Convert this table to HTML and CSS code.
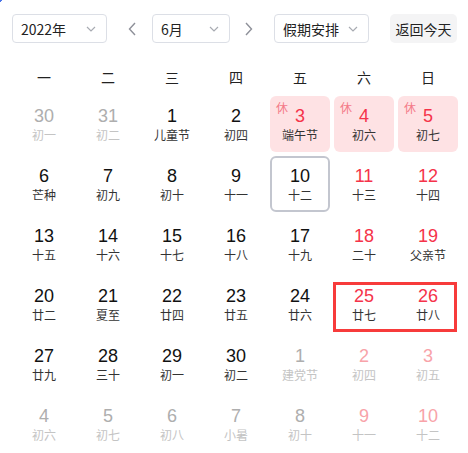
FILE: index.html
```html
<!DOCTYPE html>
<html lang="zh-CN">
<head>
<meta charset="utf-8">
<title>日历</title>
<link rel="stylesheet" href="styles.css">
</head>
<body>
<div class="corner-mark"></div>
<div class="app">
  <div class="toolbar">
    <div class="select w95"><span>2022年</span><svg class="chev" width="10" height="6" viewBox="0 0 10 6"><path d="M1 1l4 4 4-4" fill="none" stroke="#a8abb2" stroke-width="1.2"/></svg></div>
    <div class="arrow a-left"><svg width="8" height="14" viewBox="0 0 8 14"><path d="M7 1L1.5 7 7 13" fill="none" stroke="#8e9099" stroke-width="1.4"/></svg></div>
    <div class="select w78"><span>6月</span><svg class="chev" width="10" height="6" viewBox="0 0 10 6"><path d="M1 1l4 4 4-4" fill="none" stroke="#a8abb2" stroke-width="1.2"/></svg></div>
    <div class="arrow a-right"><svg width="8" height="14" viewBox="0 0 8 14"><path d="M1 1l5.5 6L1 13" fill="none" stroke="#8e9099" stroke-width="1.4"/></svg></div>
    <div class="select w95"><span>假期安排</span><svg class="chev" width="10" height="6" viewBox="0 0 10 6"><path d="M1 1l4 4 4-4" fill="none" stroke="#a8abb2" stroke-width="1.2"/></svg></div>
    <div class="today-btn">返回今天</div>
  </div>

  <div class="weekdays">
    <div>一</div><div>二</div><div>三</div><div>四</div><div>五</div><div>六</div><div>日</div>
  </div>

  <div class="grid">
    <div class="cell other"><b>30</b><i>初一</i></div>
    <div class="cell other"><b>31</b><i>初二</i></div>
    <div class="cell"><b>1</b><i>儿童节</i></div>
    <div class="cell"><b>2</b><i>初四</i></div>
    <div class="cell holiday"><em>休</em><b>3</b><i>端午节</i></div>
    <div class="cell holiday"><em>休</em><b>4</b><i>初六</i></div>
    <div class="cell holiday"><em>休</em><b>5</b><i>初七</i></div>

    <div class="cell"><b>6</b><i>芒种</i></div>
    <div class="cell"><b>7</b><i>初九</i></div>
    <div class="cell"><b>8</b><i>初十</i></div>
    <div class="cell"><b>9</b><i>十一</i></div>
    <div class="cell today"><b>10</b><i>十二</i></div>
    <div class="cell weekend"><b>11</b><i>十三</i></div>
    <div class="cell weekend"><b>12</b><i>十四</i></div>

    <div class="cell"><b>13</b><i>十五</i></div>
    <div class="cell"><b>14</b><i>十六</i></div>
    <div class="cell"><b>15</b><i>十七</i></div>
    <div class="cell"><b>16</b><i>十八</i></div>
    <div class="cell"><b>17</b><i>十九</i></div>
    <div class="cell weekend"><b>18</b><i>二十</i></div>
    <div class="cell weekend"><b>19</b><i>父亲节</i></div>

    <div class="cell"><b>20</b><i>廿二</i></div>
    <div class="cell"><b>21</b><i>夏至</i></div>
    <div class="cell"><b>22</b><i>廿四</i></div>
    <div class="cell"><b>23</b><i>廿五</i></div>
    <div class="cell"><b>24</b><i>廿六</i></div>
    <div class="cell weekend"><b>25</b><i>廿七</i></div>
    <div class="cell weekend"><b>26</b><i>廿八</i></div>

    <div class="cell"><b>27</b><i>廿九</i></div>
    <div class="cell"><b>28</b><i>三十</i></div>
    <div class="cell"><b>29</b><i>初一</i></div>
    <div class="cell"><b>30</b><i>初二</i></div>
    <div class="cell other"><b>1</b><i>建党节</i></div>
    <div class="cell other weekend"><b>2</b><i>初四</i></div>
    <div class="cell other weekend"><b>3</b><i>初五</i></div>

    <div class="cell other"><b>4</b><i>初六</i></div>
    <div class="cell other"><b>5</b><i>初七</i></div>
    <div class="cell other"><b>6</b><i>初八</i></div>
    <div class="cell other"><b>7</b><i>小暑</i></div>
    <div class="cell other"><b>8</b><i>初十</i></div>
    <div class="cell other weekend"><b>9</b><i>十一</i></div>
    <div class="cell other weekend"><b>10</b><i>十二</i></div>
  </div>
  <div class="highlight-box"></div>
</div>
</body>
</html>
```

FILE: styles.css
```css
* { box-sizing: border-box; }
html, body {
  margin: 0;
  padding: 0;
  background: #fff;
}
body {
  font-family: "Liberation Sans", "Noto Sans CJK SC", sans-serif;
  color: #222;
  width: 468px;
  height: 453px;
  overflow: hidden;
  position: relative;
}
.corner-mark {
  position: absolute;
  left: 0;
  top: 0;
  width: 3px;
  height: 3px;
  background: linear-gradient(135deg, #4a74e8 50%, transparent 50%);
}
.app {
  position: relative;
}
.toolbar {
  display: flex;
  align-items: center;
  padding: 14px 0 0 12px;
  height: 43px;
}
.select {
  height: 29px;
  border: 1px solid #dcdfe6;
  border-radius: 4px;
  display: flex;
  align-items: center;
  justify-content: space-between;
  padding: 0 10px 0 8px;
  font-size: 14px;
  color: #222;
  font-family: "Noto Sans CJK SC", sans-serif;
}
.select span { line-height: 1; }
.w95 { width: 95px; }
.w78 { width: 78px; }
.chev { display: block; }
.arrow {
  width: 20px;
  height: 29px;
  display: flex;
  align-items: center;
  justify-content: center;
}
.a-left { margin: 0 10px 0 15px; }
.a-right { margin: 0 15px 0 9px; }
.today-btn {
  margin-left: 21px;
  width: 67px;
  height: 29px;
  border-radius: 5px;
  background: #f4f4f5;
  display: flex;
  align-items: center;
  justify-content: center;
  font-size: 14px;
  color: #222;
  font-family: "Noto Sans CJK SC", sans-serif;
}
.weekdays {
  margin-top: 19px;
  display: grid;
  grid-template-columns: repeat(7, 60px);
  column-gap: 4px;
  padding-left: 14px;
  height: 30px;
  align-items: center;
  font-size: 14px;
  color: #222;
  font-family: "Noto Sans CJK SC", sans-serif;
}
.weekdays div { text-align: center; }
.grid {
  margin-top: 4px;
  display: grid;
  grid-template-columns: repeat(7, 60px);
  grid-auto-rows: 56px;
  gap: 4px;
  padding-left: 14px;
}
.cell {
  position: relative;
  display: flex;
  flex-direction: column;
  align-items: center;
  justify-content: center;
  border-radius: 6px;
}
.cell b {
  font-weight: normal;
  font-size: 18px;
  line-height: 20px;
  color: #111;
}
.cell i {
  font-style: normal;
  font-size: 12px;
  line-height: 17px;
  color: #333;
  font-family: "Noto Sans CJK SC", sans-serif;
}
.cell.weekend b { color: #f5334a; }
.cell.other b { color: #aeaeae; }
.cell.other i { color: #c4c4c4; }
.cell.other.weekend b { color: #f8a3a9; }
.cell.holiday { background: #fee2e4; }
.cell.holiday b { color: #f5334a; }
.cell.holiday em {
  position: absolute;
  left: 6px;
  top: 4px;
  font-style: normal;
  font-size: 12px;
  line-height: 16px;
  color: #f47a88;
  font-family: "Noto Sans CJK SC", sans-serif;
}
.cell.today {
  border: 2px solid #c3c6cf;
}
.highlight-box {
  position: absolute;
  left: 333px;
  top: 282px;
  width: 124px;
  height: 50px;
  border: 3px solid #f73b3b;
}
```
